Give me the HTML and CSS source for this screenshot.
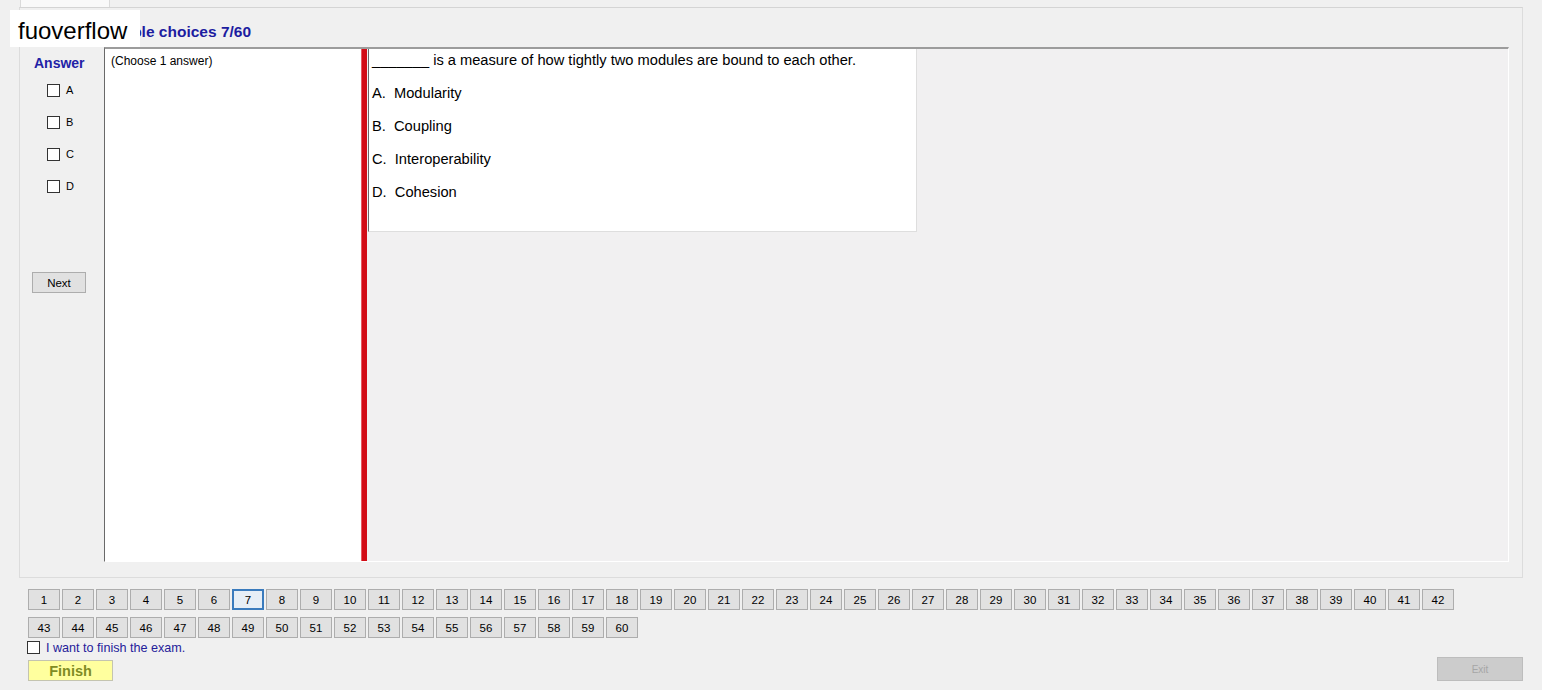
FILE: index.html
```html
<!DOCTYPE html>
<html>
<head>
<meta charset="utf-8">
<link rel="stylesheet" href="styles.css">
</head>
<body>
<div class="tabs"><div class="tab"></div></div>
<div class="tabpage">
  <div class="title">Multiple choices 7/60</div>
  <div class="content">
    <div class="answer-col">
      <div class="answer-title">Answer</div>
      <div class="opts">
        <div class="opt"><span class="cb"></span>A</div>
        <div class="opt"><span class="cb"></span>B</div>
        <div class="opt"><span class="cb"></span>C</div>
        <div class="opt"><span class="cb"></span>D</div>
      </div>
      <div class="btn next">Next</div>
    </div>
    <div class="panel">
      <div class="hint">(Choose 1 answer)</div>
      <div class="splitter"></div>
      <div class="qarea">
        <div class="qbox">
          <p class="q">_______ is a measure of how tightly two modules are bound to each other.</p>
          <p class="o">A.&nbsp; Modularity</p>
          <p class="o">B.&nbsp; Coupling</p>
          <p class="o">C.&nbsp; Interoperability</p>
          <p class="o">D.&nbsp; Cohesion</p>
        </div>
      </div>
    </div>
  </div>
</div>
<div class="nav">
  <div class="nums row1">
    <div class="btn num">1</div><div class="btn num">2</div><div class="btn num">3</div><div class="btn num">4</div><div class="btn num">5</div><div class="btn num">6</div><div class="btn num current">7</div><div class="btn num">8</div><div class="btn num">9</div><div class="btn num">10</div><div class="btn num">11</div><div class="btn num">12</div><div class="btn num">13</div><div class="btn num">14</div><div class="btn num">15</div><div class="btn num">16</div><div class="btn num">17</div><div class="btn num">18</div><div class="btn num">19</div><div class="btn num">20</div><div class="btn num">21</div><div class="btn num">22</div><div class="btn num">23</div><div class="btn num">24</div><div class="btn num">25</div><div class="btn num">26</div><div class="btn num">27</div><div class="btn num">28</div><div class="btn num">29</div><div class="btn num">30</div><div class="btn num">31</div><div class="btn num">32</div><div class="btn num">33</div><div class="btn num">34</div><div class="btn num">35</div><div class="btn num">36</div><div class="btn num">37</div><div class="btn num">38</div><div class="btn num">39</div><div class="btn num">40</div><div class="btn num">41</div><div class="btn num">42</div>
  </div>
  <div class="nums">
    <div class="btn num">43</div><div class="btn num">44</div><div class="btn num">45</div><div class="btn num">46</div><div class="btn num">47</div><div class="btn num">48</div><div class="btn num">49</div><div class="btn num">50</div><div class="btn num">51</div><div class="btn num">52</div><div class="btn num">53</div><div class="btn num">54</div><div class="btn num">55</div><div class="btn num">56</div><div class="btn num">57</div><div class="btn num">58</div><div class="btn num">59</div><div class="btn num">60</div>
  </div>
  <div class="finish-check"><span class="cb"></span>I want to finish the exam.</div>
  <div class="actions">
    <div class="btn finish">Finish</div>
    <div class="btn exit">Exit</div>
  </div>
</div>
<div class="brand">fuoverflow</div>
</body>
</html>
```

FILE: styles.css
```css
* { box-sizing: border-box; }
html, body {
  margin: 0;
  padding: 0;
  background: #f0f0f0;
  font-family: "Liberation Sans", Arial, sans-serif;
  color: #000;
}
body { width: 1542px; height: 690px; overflow: hidden; position: relative; }

.tabs { height: 7px; }
.tab {
  margin-left: 20px;
  width: 90px;
  height: 7px;
  background: #f9f9f9;
  border-left: 1px solid #dadada;
  border-right: 1px solid #dadada;
}

.tabpage {
  margin-left: 19px;
  width: 1504px;
  height: 571px;
  border: 1px solid #dcdcdc;
  border-top-color: #d4d4d4;
  background: #f0f0f0;
}

.title {
  height: 39px;
  padding-top: 9px;
  padding-left: 76px;
  line-height: 30px;
  font-size: 15.5px;
  font-weight: bold;
  color: #1c1ca0;
}

.content { display: flex; height: 515px; }

.answer-col { width: 84px; flex: none; }
.answer-title {
  margin-top: 7px;
  padding-left: 14px;
  font-size: 14px;
  line-height: 18px;
  font-weight: bold;
  color: #2222a6;
}
.opts { margin-top: 2px; }
.opt {
  height: 32px;
  display: flex;
  align-items: center;
  padding-left: 27px;
  font-size: 11px;
}
.cb {
  display: inline-block;
  width: 13px;
  height: 13px;
  border: 1px solid #333;
  background: #fff;
  margin-right: 6px;
  flex: none;
}

.btn {
  display: flex;
  align-items: center;
  justify-content: center;
  background: #e1e1e1;
  border: 1px solid #adadad;
  font-size: 12px;
}
.next {
  margin-top: 70px;
  margin-left: 12px;
  width: 54px;
  height: 21px;
  font-size: 11.5px;
}

.panel {
  width: 1405px;
  height: 515px;
  display: flex;
  border-top: 2px solid #9c9c9c;
  border-left: 1px solid #696969;
  border-right: 1px solid #ffffff;
  border-bottom: 1px solid #ffffff;
}
.hint {
  width: 256px;
  background: #fff;
  padding: 5px 6px;
  font-size: 12px;
  line-height: 14px;
}
.splitter {
  width: 6px;
  background: #d20c16;
  border-left: 1px solid #e45a62;
}
.qarea { flex: 1; background: #f1f0f1; }
.qbox {
  margin-left: 1px;
  width: 549px;
  height: 183px;
  background: #fff;
  border-left: 1px solid #6a6a6a;
  border-right: 1px solid #dedede;
  border-bottom: 1px solid #dedede;
  padding: 3px 3px 0 3px;
  font-size: 14.67px;
  line-height: 17px;
}
.qbox p { margin: 0; }
.qbox .o { margin-top: 16px; }

.nav {
  margin-top: 11px;
  margin-left: 28px;
  width: 1495px;
}
.nums { display: flex; gap: 2px; }
.nums.row1 { margin-bottom: 7px; }
.num { width: 32px; height: 21px; font-size: 11.5px; }
.num.current {
  border: 2px solid #3a7bbd;
  background: #e6eef6;
}

.finish-check {
  margin-top: 2px;
  margin-left: -1px;
  height: 15px;
  display: flex;
  align-items: center;
  font-size: 12.6px;
  color: #25209a;
}

.actions {
  margin-top: 2px;
  display: flex;
  justify-content: space-between;
  align-items: flex-end;
}
.finish {
  width: 85px;
  height: 21px;
  background: #ffff9e;
  border: 1px solid #c4c4b0;
  font-size: 14.5px;
  font-weight: bold;
  color: #7f8c24;
}
.exit {
  width: 86px;
  height: 24px;
  background: #cccccc;
  border: 1px solid #bdbdbd;
  font-size: 10px;
  color: #a6a6a6;
}

.brand {
  position: absolute;
  left: 10px;
  top: 10px;
  width: 130px;
  height: 37px;
  background: #fff;
  padding-left: 8px;
  font-size: 24px;
  line-height: 42px;
  color: #000;
}
```
